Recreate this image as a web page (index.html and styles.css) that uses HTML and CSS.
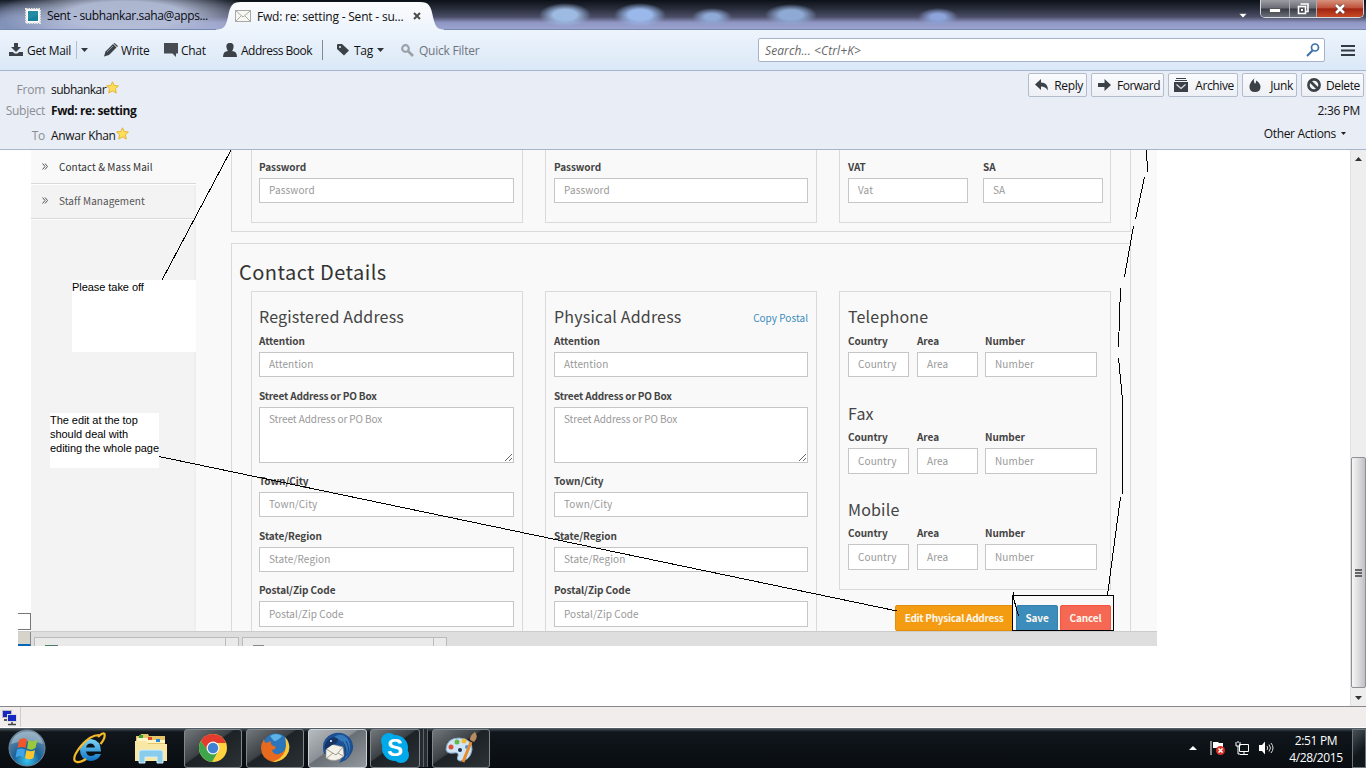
FILE: index.html
```html
<!DOCTYPE html>
<html lang="en">
<head>
<meta charset="utf-8">
<title>Fwd: re: setting</title>
<link rel="stylesheet" href="styles.css">
</head>
<body>
<div class="desktop">
  <header class="titlebar">
    <div class="tab tab-back">
      <svg width="16" height="16" viewBox="0 0 16 16"><rect x="1" y="1" width="14" height="14" fill="#fff" stroke="#e8e8e8" stroke-width="2" stroke-dasharray="1.5 1"/><rect x="3" y="3" width="10" height="10" fill="#17809b"/><path d="M3 3h10v4L3 11z" fill="#3495ac" opacity=".5"/></svg>
      <span>Sent - subhankar.saha@apps...</span>
    </div>
    <div class="tab-active">
      <svg class="tab-shape" width="228" height="31" viewBox="0 0 228 31"><defs><linearGradient id="tg" x2="0" y2="1"><stop offset="0" stop-color="#fbfcfe"/><stop offset="1" stop-color="#edf4fc"/></linearGradient></defs><path d="M0 31V29.500C9 29.500 10 25 12 17C14 6 16 2 25 2H204C213 2 215 6 217 17C219 25 220 29.500 228 29.500V31z" fill="url(#tg)"/></svg>
      <svg class="mail" width="16" height="12" viewBox="0 0 16 12"><rect x=".5" y=".5" width="15" height="11" fill="#f7f7f5" stroke="#aaa9a4"/><path d="M1 1l7 6 7-6M1 11l5-5M15 11l-5-5" fill="none" stroke="#aaa9a4"/></svg>
      <span class="tab-title">Fwd: re: setting - Sent - su...</span>
      <svg class="close" width="8" height="8" viewBox="0 0 8 8"><path d="M1 1l6 6M7 1L1 7" stroke="#4c4c48" stroke-width="2"/></svg>
    </div>
    <svg class="tabs-arrow" width="8" height="5"><path d="M0 .5h8L4 5z" fill="#fff" stroke="#333" stroke-width=".5"/></svg>
    <div class="window-buttons">
      <span class="wb wb-min"><svg width="12" height="5"><rect x=".5" y=".5" width="11" height="4" fill="#fff" stroke="#555"/></svg></span>
      <span class="wb wb-max"><svg width="12" height="12"><path d="M3.500 1h7.500v7.500H9M1.500 3.500h7v7h-7z" fill="none" stroke="#fff" stroke-width="1.600"/><rect x="4" y="6" width="2" height="2" fill="#fff"/></svg></span>
      <span class="wb wb-close"><svg width="12" height="10"><path d="M2 1l8 8M10 1L2 9" stroke="#5a3030" stroke-width="4"/><path d="M2 1l8 8M10 1L2 9" stroke="#fff" stroke-width="2.600"/></svg></span>
    </div>
  </header>

  <nav class="toolbar">
    <span class="tool get"><svg width="14" height="14" viewBox="0 0 14 14"><path d="M5 0h4v4h3L7 9 2 4h3zM0 9h4l1.500 1.500h3L10 9h4v4H0z" fill="#3b4147"/></svg><span>Get Mail</span></span>
    <i class="sep thin"></i>
    <svg class="get-arrow" width="7" height="4"><path d="M0 0h7L3.500 4z" fill="#30363c"/></svg>
    <span class="tool write"><svg width="14" height="14" viewBox="0 0 14 14"><path d="M0 13.500l1.500-5L9 1l3.500 3.500L5 12z" fill="#3b4147"/><path d="M9.500.5l1-.5L14 3l-1 1z" fill="#3b4147"/><path d="M3 9l6-6" stroke="#8c9298"/></svg><span>Write</span></span>
    <span class="tool chat"><svg width="14" height="14" viewBox="0 0 14 14"><path d="M0 0h14v10.500h-2V14L8.500 10.500H0z" fill="#454b50"/></svg><span>Chat</span></span>
    <span class="tool book"><svg width="14" height="14" viewBox="0 0 14 14"><path d="M7 0c3 0 4 2 3.500 4.500Q10 7 9 8q5 0 5 6H0q0-6 5-6Q4 7 3.500 4.500C3 2 4 0 7 0z" fill="#3b4147"/></svg><span>Address Book</span></span>
    <i class="sep"></i>
    <span class="tool tag"><svg width="12" height="12" viewBox="0 0 12 12"><path d="M0 1q0-1 1-1h4l7 6.500L7 11.500 0 5z" fill="#3b4147"/><circle cx="3" cy="3" r="1" fill="#e7f0fa"/></svg><span>Tag</span></span>
    <svg class="tag-arrow" width="7" height="4"><path d="M0 0h7L3.500 4z" fill="#30363c"/></svg>
    <span class="tool filter"><svg width="13" height="13" viewBox="0 0 13 13"><circle cx="4.500" cy="4.500" r="3.300" fill="none" stroke="#9ba1a7" stroke-width="2.200"/><path d="M7 7l5 5" stroke="#9ba1a7" stroke-width="2.600"/></svg><span>Quick Filter</span></span>
    <div class="search"><span>Search... &lt;Ctrl+K&gt;</span><svg width="14" height="14" viewBox="0 0 14 14"><circle cx="9" cy="4.500" r="3.500" fill="none" stroke="#3d6fa8" stroke-width="1.700"/><path d="M6.500 7.500L1 13" stroke="#3d6fa8" stroke-width="2"/></svg></div>
    <svg class="burger" width="14" height="11"><path d="M0 1h14M0 5.500h14M0 10h14" stroke="#333a41" stroke-width="2"/></svg>
  </nav>

  <section class="mail-header">
    <div class="fields">
      <div class="row from"><label>From</label><span>subhankar</span><svg width="13" height="13" viewBox="0 0 13 13"><path d="M6.500.8l1.700 3.700 4.200.4-3 2.900.9 4.300-3.800-2.200-3.800 2.200.9-4.300-3-2.900 4.200-.4z" fill="#ffdf55" stroke="#e2b43c"/></svg></div>
      <div class="row subject"><label>Subject</label><b>Fwd: re: setting</b></div>
      <div class="row to"><label>To</label><span>Anwar Khan</span><svg width="13" height="13" viewBox="0 0 13 13"><path d="M6.500.8l1.700 3.700 4.200.4-3 2.900.9 4.300-3.800-2.200-3.800 2.200.9-4.300-3-2.900 4.200-.4z" fill="#ffdf55" stroke="#e2b43c"/></svg></div>
    </div>
    <div class="actions">
      <div class="action-buttons">
        <span class="ab reply"><svg width="13" height="12" viewBox="0 0 13 12"><path d="M0 5.500L6 0v3.500q7 0 7 8Q10.500 7.500 6 7.500V11z" fill="#3b4147"/></svg><span>Reply</span></span>
        <span class="ab forward"><svg width="13" height="12" viewBox="0 0 13 12"><path d="M0 4h6.500V0L13 6l-6.500 6V8H0z" fill="#3b4147"/></svg><span>Forward</span></span>
        <span class="ab archive"><svg width="14" height="14" viewBox="0 0 14 14"><path d="M2 .5h10M1 2.500h12" stroke="#3b4147"/><path d="M0 4h14v10H0z" fill="#3b4147"/><path d="M2.500 6.500L7 10.500l4.500-4" fill="none" stroke="#dfe3e8" stroke-width="1.200"/></svg><span>Archive</span></span>
        <span class="ab junk"><svg width="12" height="14" viewBox="0 0 12 14"><path d="M6 0Q4 2 5.500 5 7 7 7 2.500 11.500 5 11.500 9q0 5-5.500 5T.5 9Q.5 4 6 0z" fill="#3b4147"/></svg><span>Junk</span></span>
        <span class="ab delete"><svg width="14" height="14" viewBox="0 0 14 14"><circle cx="7" cy="7" r="5.600" fill="none" stroke="#3b4147" stroke-width="2.600"/><path d="M3 3l8 8" stroke="#3b4147" stroke-width="2.600"/></svg><span>Delete</span></span>
      </div>
      <div class="time">2:36 PM</div>
      <div class="other">Other Actions<svg width="5" height="3"><path d="M0 0h5L2.500 3z" fill="#222"/></svg></div>
    </div>
  </section>

  <div class="viewer">
    <main class="attachment">
      <div class="page-row">
        <div class="edge"><i></i></div>
        <aside class="sidebar">
          <div class="menu-item current"><svg width="6" height="7"><path d="M.5.5l2.500 3-2.500 3M3 .5l2.500 3L3 6.500" fill="none" stroke="#555"/></svg><span>Contact &amp; Mass Mail</span></div>
          <div class="menu-item"><svg width="6" height="7"><path d="M.5.5l2.500 3-2.500 3M3 .5l2.500 3L3 6.500" fill="none" stroke="#555"/></svg><span>Staff Management</span></div>
        </aside>
        <div class="content">
          <section class="panel top-panel">
            <div class="card"><div class="label">Password</div><div class="input">Password</div></div>
            <div class="card"><div class="label">Password</div><div class="input">Password</div></div>
            <div class="card pair">
              <div><div class="label">VAT</div><div class="input">Vat</div></div>
              <div><div class="label">SA</div><div class="input">SA</div></div>
            </div>
          </section>
          <section class="panel details">
            <h2>Contact Details</h2>
            <div class="cards">
              <div class="card">
                <h3>Registered Address</h3>
                <div class="label">Attention</div><div class="input">Attention</div>
                <div class="label long">Street Address or PO Box</div><div class="input area">Street Address or PO Box<svg class="grip" width="9" height="9"><path d="M1 8l7-7M5 8l3-3" stroke="#666"/></svg></div>
                <div class="label">Town/City</div><div class="input">Town/City</div>
                <div class="label">State/Region</div><div class="input short">State/Region</div>
                <div class="label">Postal/Zip Code</div><div class="input postal">Postal/Zip Code</div>
              </div>
              <div class="card">
                <h3>Physical Address<a>Copy Postal</a></h3>
                <div class="label">Attention</div><div class="input">Attention</div>
                <div class="label long">Street Address or PO Box</div><div class="input area">Street Address or PO Box<svg class="grip" width="9" height="9"><path d="M1 8l7-7M5 8l3-3" stroke="#666"/></svg></div>
                <div class="label">Town/City</div><div class="input">Town/City</div>
                <div class="label">State/Region</div><div class="input short">State/Region</div>
                <div class="label">Postal/Zip Code</div><div class="input postal">Postal/Zip Code</div>
              </div>
              <div class="last-column">
                <div class="card phones">
                  <h3>Telephone</h3>
                  <div class="phone"><span class="label">Country</span><span class="label">Area</span><span class="label">Number</span><div class="input">Country</div><div class="input">Area</div><div class="input">Number</div></div>
                  <h3 class="low">Fax</h3>
                  <div class="phone"><span class="label">Country</span><span class="label">Area</span><span class="label">Number</span><div class="input tall">Country</div><div class="input tall">Area</div><div class="input tall">Number</div></div>
                  <h3 class="low">Mobile</h3>
                  <div class="phone"><span class="label">Country</span><span class="label">Area</span><span class="label">Number</span><div class="input tall">Country</div><div class="input tall">Area</div><div class="input tall">Number</div></div>
                </div>
                <div class="buttons"><span class="btn edit">Edit Physical Address</span><span class="btn save">Save</span><span class="btn cancel">Cancel</span></div>
              </div>
            </div>
          </section>
        </div>
      </div>
      <div class="downloads"><i class="corner"></i><i class="dl"><b class="green"></b></i><i class="dl second"><b></b></i></div>

      <div class="note note-a">Please take off</div>
      <div class="note note-b">The edit at the top<br>should deal with<br>editing the whole page</div>
      <svg class="ink" width="1139" height="496" viewBox="18 150 1139 496" shape-rendering="crispEdges" fill="none" stroke="#000">
        <path d="M231 150L162 280M159 456.500L897 611M1146.500 150L1147.500 172M1144.500 177L1135.500 219M1133.500 226L1124.500 277M1120.500 288L1118.500 347M1118.500 358L1122.500 400V494M1120.500 497L1107.500 595M1013.500 592v6L1018.500 616"/>
        <rect x="1012.500" y="595.500" width="101" height="35"/>
      </svg>
    </main>
    <div class="scrollbar">
      <svg class="up" width="7" height="4"><path d="M0 4h7L3.500 0z" fill="#333"/></svg>
      <div class="thumb"><i></i><i></i><i></i></div>
      <svg class="down" width="7" height="4"><path d="M0 0h7L3.500 4z" fill="#333"/></svg>
    </div>
  </div>

  <div class="status"><span><svg width="16" height="16" viewBox="0 0 16 16"><rect x=".5" y=".5" width="9" height="7" fill="#1528c0" stroke="#bbb"/><path d="M2 10h5" stroke="#555" stroke-width="2"/><rect x="5.500" y="4.500" width="9" height="7" fill="#1528c0" stroke="#ddd"/><path d="M10 12v2M6 14.500h8" stroke="#444" stroke-width="1.500"/></svg></span></div>

  <footer class="taskbar">
    <svg class="start" width="38" height="38" viewBox="0 0 38 38"><defs><radialGradient id="orb" cx=".5" cy=".85" r=".8"><stop offset="0" stop-color="#36c4f0"/><stop offset=".45" stop-color="#1c6298"/><stop offset="1" stop-color="#6f8da5"/></radialGradient></defs><circle cx="19" cy="19" r="18" fill="url(#orb)" stroke="#71899b"/><path d="M3 15Q6 3 19 2.500T35 15Q19 9 3 15z" fill="#dbe8f0" opacity=".4"/><path d="M11 11q4-3 8-.5L17.500 19q-4-2-8 0z" fill="#f0562a"/><path d="M20.500 11q4 2.500 9-.5L27.500 19q-4 3-8.500.5z" fill="#98c93c"/><path d="M9 20.500q4-2 8 0l-1.500 8q-4-3-8 0z" fill="#3fa4e8"/><path d="M18.500 21q4 2.500 8.500 0l-1.500 8q-4.500 2.500-8.500 0z" fill="#fdc62e"/></svg>
    <svg class="ie" width="34" height="32" viewBox="0 0 34 32"><defs><linearGradient id="ieb" x2="0" y2="1"><stop offset="0" stop-color="#7fd5f8"/><stop offset="1" stop-color="#0d72c4"/></linearGradient></defs><path d="M29 19.500H14q1 4.500 5 4.500 3 0 4.500-2H29Q26 29 18.500 29 8 28 8 18T19 7q10 1 10 12.500zM14 15.500h9q-1-4-4.500-4t-4.500 4z" fill="url(#ieb)"/><path d="M26 5Q31 0 32.500 2q1 4-4 10M27 3Q18 3 9 14T3 29q3 3 11-2" fill="none" stroke="#f3b929" stroke-width="2.200"/></svg>
    <svg class="folder" width="34" height="32" viewBox="0 0 34 32"><path d="M2 4h4l1-2h7l1 2h16v24H2z" fill="#e5c567"/><path d="M3 6h13l1 2h14v3H3z" fill="#fff6c7"/><path d="M1 9h11l2 3h19v17H1z" fill="#f9e7a4"/><path d="M5 3h4v3H5zM7 3h2v3H7z" fill="#36a536"/><path d="M14 5h4v3h-4z" fill="#d94a2b"/><path d="M22 7h4v3h-4z" fill="#2f88d2"/><path d="M5 31V20q0-2 3-2h18q3 0 3 2v11h-6v-6H11v6z" fill="#8accec" stroke="#d2effa"/></svg>
    <span class="task chrome"><svg width="30" height="30" viewBox="0 0 30 30"><circle cx="15" cy="15" r="14" fill="#ffd23e"/><path d="M2.900 8A14 14 0 0 1 28 10H15a6 6 0 0 0-5.500 8z" fill="#e33b2e"/><path d="M2.900 8A14 14 0 0 0 14 29l6-10.500q-5 5-10 0z" fill="#3da64b"/><circle cx="15" cy="15" r="6.500" fill="#f4f4f4"/><circle cx="15" cy="15" r="5.200" fill="#3f82d4"/></svg></span>
    <span class="task firefox"><svg width="30" height="30" viewBox="0 0 30 30"><circle cx="16" cy="14" r="13.500" fill="#2b75bb"/><path d="M10 3q6-4 12 0-4 5-8 5z" fill="#5db3e4"/><path d="M27 7q5 11-3 18-11 8-20-1-6-9 0-18 0 3 2 4l5-2q-1 4 3 5l2 1q-1 3-4 3 1 5 7 4 8-2 8-14z" fill="#e86a1f"/><path d="M25 4q8 10 1 19-5 6-14 6 10-3 13-11 2-5 0-14z" fill="#fcca35"/></svg></span>
    <span class="task bird"><svg width="32" height="32" viewBox="0 0 32 32"><path d="M2 22Q-2 7 10 2q10-4 18 4 8 11-4 22l-7 3q3-4 3-7z" fill="#1d4f93"/><path d="M12 5Q19 0 25 6q7 9-2 22 3-10-1-15-4-6-10-8z" fill="#3579bd"/><path d="M20 9q7 8 2 16M24 9q5 8 0 15" fill="none" stroke="#173f7c"/><path d="M4 16l5-4 12 3 1 9q-9 8-18 2z" fill="#f4f1e8" stroke="#9b998f" stroke-width=".6"/><path d="M4 17l10 6 7-8M5 26l6-5M21 24l-5-3" fill="none" stroke="#a09c90"/><path d="M6 8q5-5 10-1 0 5-6 6l-7 5q-1-6 3-10z" fill="#163565"/><circle cx="9" cy="9" r="1" fill="#fff"/></svg></span>
    <span class="task skype"><svg width="32" height="32" viewBox="0 0 32 32"><circle cx="16" cy="16" r="13" fill="#00a9ea"/><circle cx="10" cy="9" r="8" fill="#00a9ea"/><circle cx="22" cy="23" r="8" fill="#00a9ea"/></svg><b>S</b></span>
    <i class="stack"></i><i class="stack"></i>
    <span class="task paint"><svg width="34" height="32" viewBox="0 0 34 32"><path d="M15 6q14 1 13 12-2 11-12 11-4-1-2-5 1-4-4-3-8 1-8-4Q3 6 15 6z" fill="#cfe4f4" stroke="#87a9c8"/><circle cx="7" cy="15" r="2.500" fill="#df503b"/><circle cx="13" cy="10" r="2.500" fill="#63b947"/><circle cx="20" cy="9" r="2.500" fill="#f4b934"/><circle cx="23" cy="15" r="2" fill="#538de0"/><circle cx="16" cy="18" r="2" fill="#1d3150"/><path d="M19 30l8-20" stroke="#e78a2a" stroke-width="3"/><path d="M26 8q0-5 5-8 4 5-1 10z" fill="#b88b61"/></svg></span>
    <div class="tray">
      <svg class="tray-up" width="8" height="4"><path d="M0 4h8L4 0z" fill="#fff"/></svg>
      <svg class="flag" width="15" height="16" viewBox="0 0 15 16"><path d="M1 1v14" stroke="#fff"/><path d="M3 2h5l1 1h4v6H8L7 8H3z" fill="#fff"/><circle cx="10.500" cy="10.500" r="4.500" fill="#d93025"/><path d="M8.500 8.500l4 4M12.500 8.500l-4 4" stroke="#fff" stroke-width="1.500"/></svg>
      <svg class="net" width="15" height="15" viewBox="0 0 15 15"><path d="M4.500 3.500h9v7h-9zM9 11v2M5 13.500h8M1 1v4h4V1M3 5v8h2M3 0v2" fill="none" stroke="#fff"/></svg>
      <svg class="sound" width="15" height="14" viewBox="0 0 15 14"><path d="M0 4h3l3-3.500v13L3 10H0z" fill="#fff"/><path d="M8 5q1.500 2 0 4M10 3.500q3 3.500 0 7M12 2q4 5 0 10" fill="none" stroke="#ddd"/></svg>
      <div class="clock">2:51 PM<br>4/28/2015</div>
      <i class="peek"></i>
    </div>
  </footer>
</div>
</body>
</html>
```
FILE: styles.css
```css
* { box-sizing: border-box; }
body { margin: 0; overflow: hidden; background: #fff; font: 12px "Open Sans", "Noto Sans", sans-serif; color: #111; white-space: nowrap; }
svg { display: block; flex: none; }
.desktop { width: 1366px; height: 768px; display: flex; flex-direction: column; }

.titlebar {
  height: 30px; flex: none; display: flex; align-items: flex-start; border-bottom: 1px solid #7488b2;
  background:
    radial-gradient(ellipse 130px 30px at 125px 15px, rgba(180,190,216,.95) 45%, transparent),
    radial-gradient(ellipse 60px 24px at 15px 22px, rgba(125,143,182,.9) 20%, transparent),
    radial-gradient(ellipse 26px 12px at 565px 15px, #9dbbe2 45%, transparent),
    radial-gradient(ellipse 26px 12px at 640px 15px, #9ab8ea 45%, transparent),
    radial-gradient(ellipse 20px 9px at 712px 17px, #90aad8 35%, transparent),
    radial-gradient(ellipse 26px 11px at 791px 15px, #8ea9d4 45%, transparent),
    radial-gradient(ellipse 20px 9px at 938px 17px, #8da4da 35%, transparent),
    linear-gradient(#0c1118, #282d3b 30%, #4b4d66 58%, #8f96c3 78%, #9ba3cf);
}
.tab { display: flex; align-items: center; height: 30px; padding: 1px 0 0 25px; width: 216px; gap: 6px; letter-spacing: -.37px; flex: none; color: #0b0b12; }
.tab-active { position: relative; width: 228px; height: 31px; display: flex; align-items: center; flex: none; padding: 1px 0 0 19px; }
.tab-shape { position: absolute; left: 0; top: 0; }
.mail, .tab-title, .close { position: relative; }
.tab-title { margin-left: 6px; width: 149px; letter-spacing: -.2px; }
.close { margin-left: 7px; }
.tabs-arrow { margin: 13px 13px 0 auto; }
.window-buttons { display: flex; width: 104px; height: 18px; margin-right: 2px; border: 1px solid #d6d9e0; border-top: 0; border-radius: 0 0 5px 5px; overflow: hidden; flex: none; }
.wb { display: flex; justify-content: center; align-items: center; border-right: 1px solid #a9acb4; background: linear-gradient(#9b9da3, #686b73 48%, #363942 52%, #6c7078); }
.wb-min { width: 29px; padding-top: 4px; }
.wb-max { width: 27px; }
.wb-close { flex: 1; border: 0; background: linear-gradient(#d6917c, #c0523c 46%, #a12413 52%, #c74a24); }

.toolbar { height: 41px; flex: none; display: flex; align-items: center; background: linear-gradient(#edf4fc, #dbe8f7); border-bottom: 1px solid #a7b4ce; letter-spacing: -.3px; padding-left: 9px; }
.tool { display: flex; align-items: center; gap: 4px; flex: none; }
.get { width: 67px; }
.sep { width: 1px; height: 20px; background: #7e8a9a; flex: none; }
.sep.thin { height: 18px; background: #b5bfcc; }
.get-arrow { margin: 0 16px 0 4px; }
.write { width: 60px; gap: 3px; letter-spacing: -.35px; }
.chat { width: 59px; gap: 3px; }
.book { width: 99px; letter-spacing: -.5px; }
.tag { margin-left: 14px; width: 40px; gap: 5px; }
.tag-arrow { margin-right: 17px; }
.filter { width: 357px; gap: 5px; color: #6e747b; letter-spacing: -.22px; }
.search { width: 567px; height: 24px; border: 1px solid #a4b3c9; border-radius: 2px; background: #fff; display: flex; align-items: center; justify-content: space-between; padding: 0 4px 0 6px; font-style: italic; color: #666; letter-spacing: .1px; flex: none; }
.burger { margin-left: 16px; }

.mail-header { height: 79px; flex: none; display: flex; justify-content: space-between; background: #e9edf5; border-bottom: 1px solid #a9b3ca; }
.fields { padding-top: 7px; }
.row { display: flex; align-items: center; height: 22px; letter-spacing: -.5px; }
.row label { width: 45px; margin-right: 6px; text-align: right; color: #8a8d93; letter-spacing: -.25px; }
.row svg { margin-top: -3px; }
.row b { letter-spacing: -.4px; }
.row.to { margin-top: 2px; letter-spacing: -.3px; }
.row.subject { padding-bottom: 1px; }
.actions { width: 340px; padding: 2px 2px 0 0; }
.action-buttons { display: flex; justify-content: flex-end; gap: 4px; }
.ab { height: 24px; display: flex; align-items: center; justify-content: space-between; border: 1px solid #b3bccb; border-radius: 2px; padding: 0 3px 0 6px; background: linear-gradient(#fafbfd, #edf0f5); letter-spacing: -.36px; }
.reply { width: 59px; } .forward { width: 73px; letter-spacing: -.5px; } .archive { width: 70px; padding-left: 5px; } .junk { width: 55px; } .delete { width: 63px; padding-left: 5px; }
.time { text-align: right; line-height: 20px; margin-top: 4px; padding-right: 4px; letter-spacing: -.35px; }
.other { display: flex; justify-content: flex-end; align-items: center; gap: 5px; height: 22px; margin-top: 1px; padding-right: 18px; letter-spacing: -.34px; }

.viewer { height: 556px; flex: none; display: flex; justify-content: space-between; background: #fff; }
.attachment { position: relative; width: 1139px; height: 496px; margin-left: 18px; overflow: hidden; font-family: "Noto Sans CJK SC", "Open Sans", sans-serif; }
.page-row { display: flex; height: 481px; overflow: hidden; }
.edge { width: 13px; padding-top: 463px; flex: none; }
.edge i { display: block; height: 17px; border: 1px solid #777; border-left: 0; }
.sidebar { width: 165px; background: #f3f3f3; flex: none; box-shadow: inset -2px 0 2px #eee; font-size: 10px; letter-spacing: .06px; color: #555; }
.menu-item { height: 35px; border-bottom: 1px solid #dadada; box-shadow: 0 1px #fff; display: flex; align-items: center; gap: 11px; padding: 0 0 1px 11px; }
.menu-item.current { height: 34px; background: #f9f9f9; color: #333; }
.content { flex: 1; background: #f9f9f9; padding-left: 35px; }
.panel { width: 900px; border: 1px solid #dadada; }
.top-panel { height: 82px; border-top: 0; display: flex; gap: 22px; padding-left: 19px; }
.card { width: 272px; border: 1px solid #dadada; padding: 13px 8px 0 7px; flex: none; }
.card + .card { padding-left: 8px; }
.top-panel .card { height: 73px; border-top: 0; padding-top: 6px; }
.pair { display: flex; gap: 15px; }
.pair > div { width: 120px; flex: none; }
.label { display: block; height: 22px; line-height: 22px; font-size: 10px; font-weight: bold; color: #444; letter-spacing: -.05px; }
.label.long { letter-spacing: -.17px; }
.input { height: 25px; line-height: 22px; border: 1px solid #c6c6c6; background: #fff; padding-left: 9px; font-size: 10px; color: #999; letter-spacing: .12px; margin-bottom: 8px; }
.input.short { margin-bottom: 7px; }
.input.postal { height: 26px; line-height: 24px; letter-spacing: .05px; }
.input.tall { height: 26px; line-height: 23px; }
.input.area { position: relative; height: 56px; margin-bottom: 7px; letter-spacing: -.08px; }
.grip { position: absolute; right: 0; bottom: 0; }
.details { margin-top: 11px; height: 400px; }
h2 { margin: 0; padding: 10px 0 0 7px; height: 47px; line-height: 36px; font-size: 20px; font-weight: 400; letter-spacing: .45px; color: #333; }
h3 { margin: 0 0 1px; height: 24px; line-height: 23px; font-size: 16px; font-weight: 400; letter-spacing: .18px; color: #444; display: flex; justify-content: space-between; }
h3.low { line-height: 25px; }
h3 a { font-size: 10px; color: #3c8dbc; letter-spacing: .02px; padding-top: 1px; }
.cards { display: flex; gap: 22px; padding-left: 19px; }
.cards > .card { height: 360px; }
.last-column { width: 272px; }
.phones { height: 299px; padding-left: 8px; }
.phone { display: grid; grid-template-columns: 61px 61px 111px; grid-template-rows: 22px 25px; column-gap: 8px; margin-bottom: 24px; }
.phone > :nth-child(3n) { margin-left: -1px; }
.phone .input { margin-bottom: 0; }
.buttons { display: flex; justify-content: flex-end; margin-top: 15px; gap: 2px; }
.btn { height: 26px; line-height: 23px; text-align: center; color: #fff7ee; font-size: 10px; font-weight: bold; border: 1px solid #e08e0b; border-radius: 2px; letter-spacing: -.12px; }
.edit { width: 118px; background: #f39c12; margin-right: 1px; letter-spacing: -.28px; }
.save { width: 42px; background: #3c8dbc; border-color: #367fa9; }
.cancel { width: 51px; background: #f56954; border-color: #f4543c; }
.downloads { height: 15px; background: #dedede; border-top: 1px solid #ccc; display: flex; }
.corner { width: 13px; background: #d6d3cb; border: solid #888; border-width: 0 1px 0 0; border-bottom: 2px solid #0866b8; }
.dl { width: 205px; margin: 5px 0 0 3px; border: 1px solid #bbb; border-bottom: 0; background: linear-gradient(90deg, #eaeaea 190px, #bbb 190px, #bbb 191px, #eaeaea 191px); padding: 7px 0 0 10px; }
.dl b { display: block; width: 11px; height: 2px; background: #888; }
.dl .green { background: linear-gradient(90deg, #388b46, #668); width: 13px; }
.note { position: absolute; background: #fff; font: 11px/14px "Liberation Sans", Arial, sans-serif; color: #000; letter-spacing: -.05px; }
.note-a { left: 54px; top: 130px; width: 124px; height: 72px; }
.note-b { left: 32px; top: 263px; width: 109px; height: 55px; }
.ink { position: absolute; left: 0; top: 0; }
.scrollbar { width: 16px; background: #eee; border-left: 1px solid #e2e2e2; display: flex; flex-direction: column; align-items: center; }
.up { margin-top: 7px; }
.thumb { width: 15px; height: 231px; margin-top: 296px; border: 1px solid #8e9096; border-radius: 2px; background: linear-gradient(90deg, #f6f6f6, #ddd 50%, #bfc0c4); display: flex; flex-direction: column; justify-content: center; align-items: center; gap: 1px; }
.thumb i { width: 7px; height: 2px; background: #666; }
.down { margin-top: 8px; }

.status { height: 22px; flex: none; background: #f0edec; border-top: 1px solid #888; border-bottom: 1px solid #fff; }
.status span { display: block; width: 21px; height: 20px; padding: 3px 0 0 2px; border-right: 1px solid #ccc; }

.taskbar { height: 40px; flex: none; display: flex; align-items: center; background: linear-gradient(#5d6972 0, #30383e 2px, #10161b 4px, #090d12); color: #fff; }
.start { margin-left: 8px; }
.ie { margin-left: 26px; }
.folder { margin-left: 28px; margin-right: 1px; }
.task { position: relative; height: 39px; border: 1px solid #82878b; border-radius: 3px; background: linear-gradient(145deg, #71777b 0, #3b4145 43%, #1d2226 46%, #2c3135); display: flex; align-items: center; justify-content: center; flex: none; }
.chrome { width: 58px; margin-left: 15px; }
.firefox { width: 58px; margin-left: 4px; }
.bird { width: 59px; margin-left: 4px; background: linear-gradient(145deg, #b7bcc0, #8b9196 43%, #686f75 46%, #92989d); border-color: #ced1d4; }
.skype { width: 50px; margin-left: 3px; }
.skype b { position: absolute; font: bold 24px "Liberation Sans", sans-serif; }
.stack { width: 4px; height: 38px; border-right: 1px solid #5d6368; background: #252b30; }
.paint { width: 58px; margin-left: 4px; }
.tray { flex: 1; display: flex; justify-content: flex-end; align-items: center; height: 40px; }
.flag { margin-left: 13px; } .net { margin-left: 10px; } .sound { margin-left: 9px; }
.clock { width: 58px; margin-left: 13px; text-align: center; line-height: 17px; letter-spacing: -.35px; padding-top: 1px; }
.peek { width: 14px; height: 39px; margin-left: 7px; border: 1px solid #6c757b; background: linear-gradient(135deg, #485157, #11171b 60%); }
```
